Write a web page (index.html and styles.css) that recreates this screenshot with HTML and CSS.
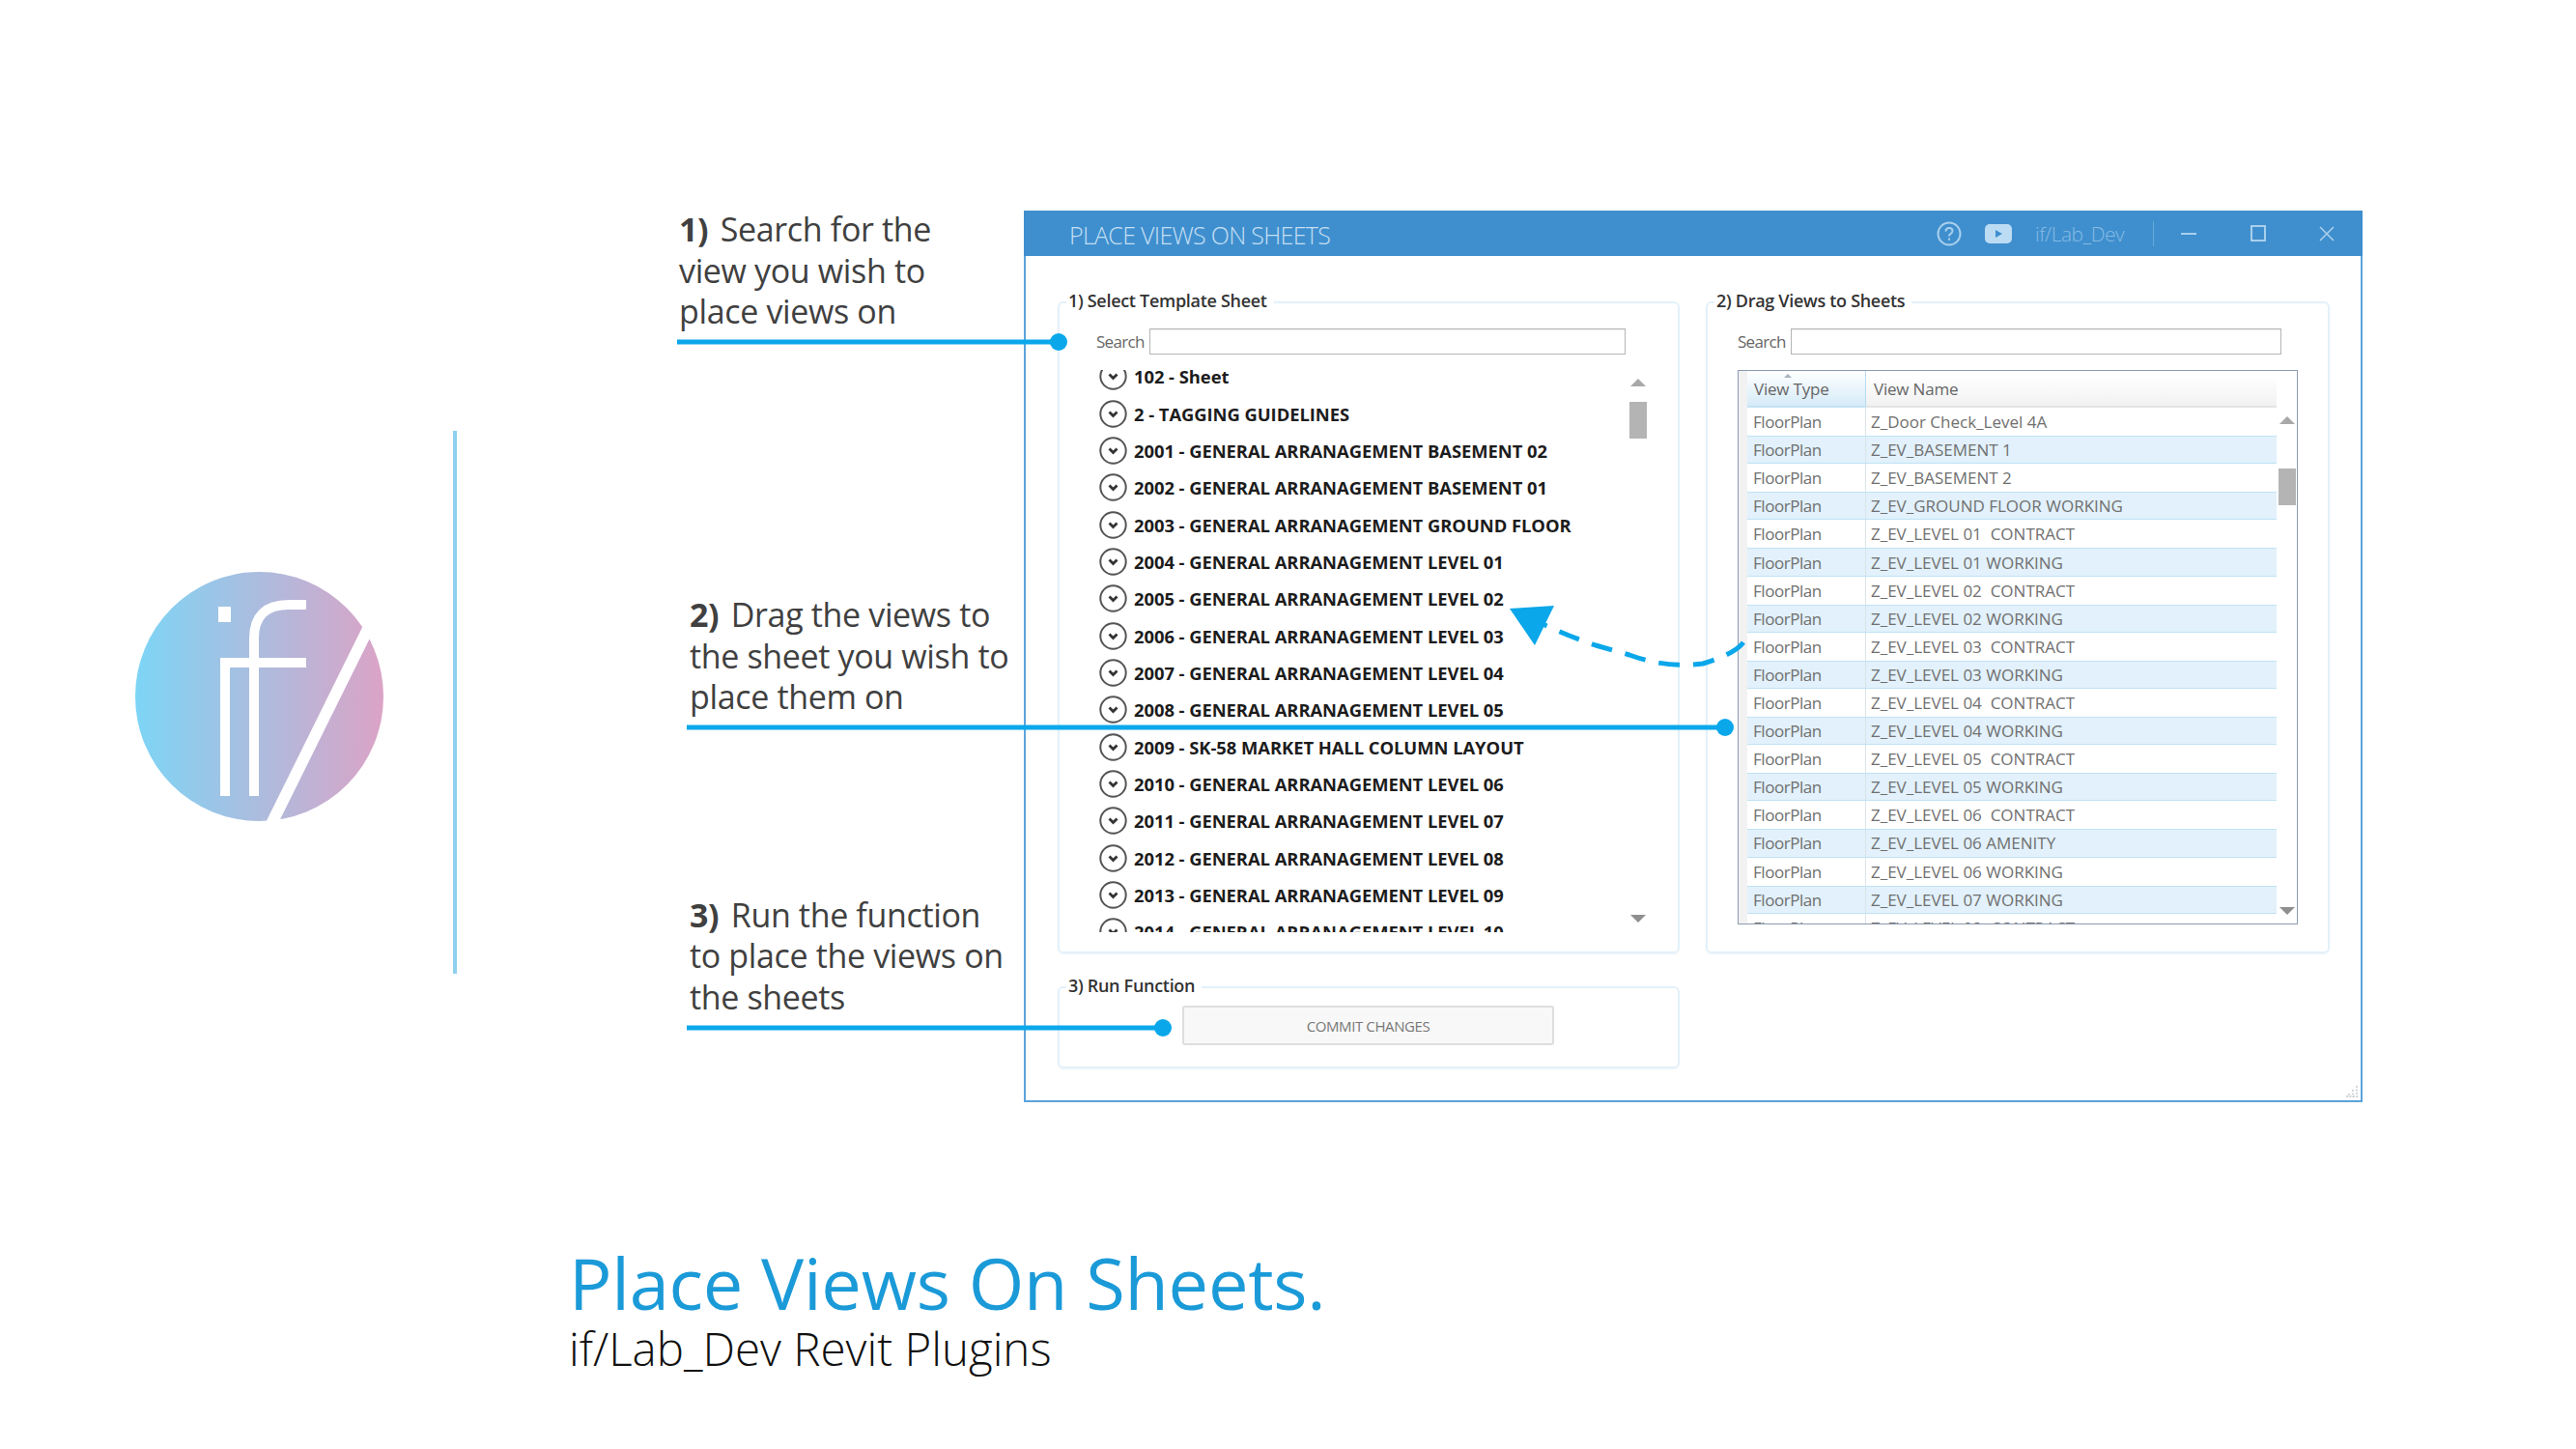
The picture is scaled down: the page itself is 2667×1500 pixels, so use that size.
FILE: index.html
```html
<!DOCTYPE html>
<html lang="en">
<head>
    <meta charset="UTF-8">
    <title>Place Views On Sheets</title>
    <link rel="stylesheet" href="styles.css">
</head>
<body>
<div class="slide">
    <div class="top">
        <!-- logo and divider -->
        <div class="brand">
            <svg class="logo" width="260" height="262" viewBox="0 0 260 262">
                <defs>
                    <linearGradient id="logoFill" x1="0" y1="0" x2="1" y2="0">
                        <stop offset="0" stop-color="#7dd5f6"/>
                        <stop offset="1" stop-color="#dba3c6"/>
                    </linearGradient>
                </defs>
                <ellipse cx="129.5" cy="130" rx="128.5" ry="129" fill="url(#logoFill)"/>
                <path d="M243 58 L142 262" stroke="#fff" stroke-width="12" fill="none"/>
                <rect x="87" y="37" width="13" height="16" fill="#fff"/>
                <path d="M94 95 V233 M124 233 V70 Q124 35 160 35 H178 M89 95 H178" stroke="#fff" stroke-width="10" fill="none"/>
            </svg>
        </div>

        <!-- step notes -->
        <div class="notes">
            <p class="note note-1"><b>1)</b> Search for the<br>view you wish to<br>place views on</p>
            <p class="note note-2"><b>2)</b> Drag the views to<br>the sheet you wish to<br>place them on</p>
            <p class="note note-3"><b>3)</b> Run the function<br>to place the views on<br>the sheets</p>
        </div>

        <!-- plugin window -->
        <div class="window">
            <div class="titlebar">
                <span class="window-title">PLACE VIEWS ON SHEETS</span>
                <svg class="help-icon" width="26" height="26" viewBox="0 0 26 26">
                    <circle cx="13" cy="13" r="11.5" fill="none" stroke="#a9cfec" stroke-width="2"/>
                    <path d="M9.5 10.5 Q9.5 7 13 7 Q16.5 7 16.5 10 Q16.5 12 14.5 13 Q13 13.8 13 15.5" fill="none" stroke="#a9cfec" stroke-width="2"/>
                    <rect x="12" y="17.5" width="2" height="2.2" fill="#a9cfec"/>
                </svg>
                <svg class="yt-icon" width="28" height="20" viewBox="0 0 28 20">
                    <rect width="28" height="20" rx="5" fill="#bcdcf3"/>
                    <path d="M11 6 L18 10 L11 14 Z" fill="#3f8fce"/>
                </svg>
                <span class="user-name">if/Lab_Dev</span>
                <span class="bar-divider"></span>
                <span class="win-min"></span>
                <span class="win-max"></span>
                <svg class="win-close" width="16" height="16" viewBox="0 0 16 16">
                    <path d="M1 1 L15 15 M15 1 L1 15" stroke="#a9cfec" stroke-width="1.6"/>
                </svg>
            </div>

            <div class="window-body">
                <div class="groups">
                    <fieldset class="group group-sheets">
                        <legend>1) Select Template Sheet</legend>
                        <div class="search-row">
                            <label>Search</label>
                            <span class="search-box"></span>
                        </div>
                        <div class="sheet-area">
                            <ul class="sheet-list">
                                <li><svg class="chev"><use href="#chevron"/></svg>102 - Sheet</li>
                                <li><svg class="chev"><use href="#chevron"/></svg>2 - TAGGING GUIDELINES</li>
                                <li><svg class="chev"><use href="#chevron"/></svg>2001 - GENERAL ARRANAGEMENT BASEMENT 02</li>
                                <li><svg class="chev"><use href="#chevron"/></svg>2002 - GENERAL ARRANAGEMENT BASEMENT 01</li>
                                <li><svg class="chev"><use href="#chevron"/></svg>2003 - GENERAL ARRANAGEMENT GROUND FLOOR</li>
                                <li><svg class="chev"><use href="#chevron"/></svg>2004 - GENERAL ARRANAGEMENT LEVEL 01</li>
                                <li><svg class="chev"><use href="#chevron"/></svg>2005 - GENERAL ARRANAGEMENT LEVEL 02</li>
                                <li><svg class="chev"><use href="#chevron"/></svg>2006 - GENERAL ARRANAGEMENT LEVEL 03</li>
                                <li><svg class="chev"><use href="#chevron"/></svg>2007 - GENERAL ARRANAGEMENT LEVEL 04</li>
                                <li><svg class="chev"><use href="#chevron"/></svg>2008 - GENERAL ARRANAGEMENT LEVEL 05</li>
                                <li><svg class="chev"><use href="#chevron"/></svg>2009 - SK-58 MARKET HALL COLUMN LAYOUT</li>
                                <li><svg class="chev"><use href="#chevron"/></svg>2010 - GENERAL ARRANAGEMENT LEVEL 06</li>
                                <li><svg class="chev"><use href="#chevron"/></svg>2011 - GENERAL ARRANAGEMENT LEVEL 07</li>
                                <li><svg class="chev"><use href="#chevron"/></svg>2012 - GENERAL ARRANAGEMENT LEVEL 08</li>
                                <li><svg class="chev"><use href="#chevron"/></svg>2013 - GENERAL ARRANAGEMENT LEVEL 09</li>
                                <li><svg class="chev"><use href="#chevron"/></svg>2014 - GENERAL ARRANAGEMENT LEVEL 10</li>
                            </ul>
                            <div class="scroll scroll-sheets">
                                <span class="arrow-up"></span>
                                <span class="thumb"></span>
                                <span class="arrow-down"></span>
                            </div>
                        </div>
                    </fieldset>

                    <fieldset class="group group-views">
                        <legend>2) Drag Views to Sheets</legend>
                        <div class="search-row">
                            <label>Search</label>
                            <span class="search-box"></span>
                        </div>
                        <div class="grid-box">
                            <div class="grid-main">
                                <div class="grid-head">
                                    <span class="head-type">View Type</span>
                                    <span class="head-name">View Name</span>
                                </div>
                                <div class="grid-row"><span>FloorPlan</span><span>Z_Door Check_Level 4A</span></div>
                                <div class="grid-row"><span>FloorPlan</span><span>Z_EV_BASEMENT 1</span></div>
                                <div class="grid-row"><span>FloorPlan</span><span>Z_EV_BASEMENT 2</span></div>
                                <div class="grid-row"><span>FloorPlan</span><span>Z_EV_GROUND FLOOR WORKING</span></div>
                                <div class="grid-row"><span>FloorPlan</span><span>Z_EV_LEVEL 01&nbsp; CONTRACT</span></div>
                                <div class="grid-row"><span>FloorPlan</span><span>Z_EV_LEVEL 01 WORKING</span></div>
                                <div class="grid-row"><span>FloorPlan</span><span>Z_EV_LEVEL 02&nbsp; CONTRACT</span></div>
                                <div class="grid-row"><span>FloorPlan</span><span>Z_EV_LEVEL 02 WORKING</span></div>
                                <div class="grid-row"><span>FloorPlan</span><span>Z_EV_LEVEL 03&nbsp; CONTRACT</span></div>
                                <div class="grid-row"><span>FloorPlan</span><span>Z_EV_LEVEL 03 WORKING</span></div>
                                <div class="grid-row"><span>FloorPlan</span><span>Z_EV_LEVEL 04&nbsp; CONTRACT</span></div>
                                <div class="grid-row"><span>FloorPlan</span><span>Z_EV_LEVEL 04 WORKING</span></div>
                                <div class="grid-row"><span>FloorPlan</span><span>Z_EV_LEVEL 05&nbsp; CONTRACT</span></div>
                                <div class="grid-row"><span>FloorPlan</span><span>Z_EV_LEVEL 05 WORKING</span></div>
                                <div class="grid-row"><span>FloorPlan</span><span>Z_EV_LEVEL 06&nbsp; CONTRACT</span></div>
                                <div class="grid-row"><span>FloorPlan</span><span>Z_EV_LEVEL 06 AMENITY</span></div>
                                <div class="grid-row"><span>FloorPlan</span><span>Z_EV_LEVEL 06 WORKING</span></div>
                                <div class="grid-row"><span>FloorPlan</span><span>Z_EV_LEVEL 07 WORKING</span></div>
                                <div class="grid-row"><span>FloorPlan</span><span>Z_EV_LEVEL 08&nbsp; CONTRACT</span></div>
                            </div>
                            <div class="scroll scroll-views">
                                <span class="arrow-up"></span>
                                <span class="thumb"></span>
                                <span class="arrow-down"></span>
                            </div>
                        </div>
                    </fieldset>
                </div>

                <fieldset class="group group-run">
                    <legend>3) Run Function</legend>
                    <button class="commit-btn" type="button">COMMIT CHANGES</button>
                </fieldset>
            </div>
            <svg class="grip" width="14" height="14" viewBox="0 0 14 14">
                <path d="M12 1 V13 M8 5 V13 M4 9 V13 M1 12 H13" stroke="#c5c9cd" stroke-width="1.5" stroke-dasharray="2 1.5"/>
            </svg>
        </div>
    </div>

    <div class="caption">
        <h1>Place Views On Sheets.</h1>
        <h2>if/Lab_Dev Revit Plugins</h2>
    </div>

    <!-- callout lines and drag arrow, drawn over the window -->
    <svg class="callouts" width="2667" height="1500" viewBox="0 0 2667 1500">
        <g stroke="#0aa7ea" stroke-width="5" fill="none">
            <path d="M701 354 H1096"/>
            <path d="M711 753 H1786"/>
            <path d="M711 1064 H1204"/>
            <path d="M1805 665 Q1796 677 1763 687 Q1725 692 1687 678 L1652 668 Q1625 659 1597 646" stroke-dasharray="22 14"/>
        </g>
        <g fill="#0aa7ea">
            <circle cx="1096" cy="354" r="9"/>
            <circle cx="1786" cy="753" r="9"/>
            <circle cx="1204" cy="1064" r="9"/>
            <path d="M1563 630 L1609 627 L1589 668 Z"/>
        </g>
    </svg>

    <svg class="icon-defs" width="0" height="0">
        <symbol id="chevron" viewBox="0 0 29 29">
            <circle cx="14.5" cy="14.5" r="13.2" fill="none" stroke="#555" stroke-width="2"/>
            <path d="M10.5 12.5 L14.5 16.5 L18.5 12.5" fill="none" stroke="#333" stroke-width="2.8"/>
        </symbol>
    </svg>
</div>
</body>
</html>
```

FILE: styles.css
```css
* {
    box-sizing: border-box;
}
body {
    margin: 0;
    background-color: #fff;
    font-family: "Open Sans", "Liberation Sans", sans-serif;
}
.slide {
    position: relative;
    width: 2667px;
    height: 1500px;
    overflow: hidden;
}
.top {
    display: flex;
    align-items: flex-start;
    padding-top: 218px;
    height: 1141px;
}

/* logo */
.brand {
    width: 473px;
    height: 562px;
    margin-top: 228px;
    border-right: 4px solid #8fd0f0;
    padding-left: 139px;
    padding-top: 145px;
}
.logo {
    display: block;
}

/* notes */
.notes {
    width: 587px;
    margin-top: -2px;
    color: #404040;
    font-size: 34px;
    line-height: 42.5px;
}
.note {
    margin: 0;
    letter-spacing: -0.35px;
}
.note b {
    margin-right: 4px;
    font-weight: 700;
}
.note-1 {
    padding-left: 230px;
}
.note-2 {
    margin-top: 271.5px;
    padding-left: 241px;
}
.note-3 {
    margin-top: 183px;
    padding-left: 241px;
}

/* window */
.window {
    position: relative;
    width: 1386px;
    height: 923px;
    border: 2px solid #5ba3dc;
    border-top: none;
    background-color: #fff;
}
.titlebar {
    display: flex;
    align-items: center;
    height: 47px;
    margin: 0 -2px;
    background-color: #3f8fce;
    color: #c5dff3;
}
.window-title {
    margin-left: 47px;
    margin-top: 2px;
    font-size: 25px;
    font-weight: 300;
    letter-spacing: -0.7px;
    width: 898px;
}
.help-icon {
    margin-left: 0;
}
.yt-icon {
    margin-left: 24px;
}
.user-name {
    margin-left: 24px;
    width: 122px;
    font-size: 21px;
    font-weight: 300;
    letter-spacing: -0.5px;
    color: #86bbe4;
}
.bar-divider {
    width: 1px;
    height: 26px;
    background-color: #6aa8da;
}
.win-min {
    width: 16px;
    height: 2px;
    margin-left: 28px;
    background-color: #a9cfec;
}
.win-max {
    width: 16px;
    height: 17px;
    margin-left: 56px;
    border: 2px solid #a9cfec;
}
.win-close {
    margin-left: 55px;
}

.window-body {
    padding: 37px 0 0 33px;
}
.groups {
    display: flex;
    gap: 27px;
}
.group {
    margin: 0;
    padding: 0;
    min-width: 0;
    border: 2px solid #e3f1fa;
    border-radius: 6px;
    box-shadow: 0 1px 2px #eef3f6;
}
.group legend {
    margin-left: 7px;
    padding: 0 7px 0 2px;
    height: 22px;
    line-height: 19px;
    font-size: 18px;
    font-weight: 600;
    letter-spacing: -0.3px;
    color: #333;
}
.group-sheets {
    width: 644px;
    height: 685px;
}
.group-views {
    width: 646px;
    height: 685px;
}

.search-row {
    display: flex;
    align-items: center;
    height: 27px;
    margin-top: 16px;
}
.search-row label {
    color: #666;
    font-size: 17px;
    letter-spacing: -0.7px;
}
.search-box {
    height: 27px;
    margin-left: 5.5px;
    border: 1px solid #b5b5b5;
    box-shadow: inset 0 1px 1px #eee;
}
.group-sheets .search-row {
    padding-left: 38px;
}
.group-sheets .search-box {
    width: 493px;
}
.group-views .search-row {
    padding-left: 31px;
}
.group-views .search-box {
    width: 508px;
}

/* sheet list */
.sheet-area {
    display: flex;
    height: 582px;
    margin-top: 16px;
    overflow: hidden;
}
.sheet-list {
    width: 590px;
    margin: -12.5px 0 0;
    padding: 0 0 0 41px;
    list-style: none;
}
.sheet-list li {
    display: flex;
    align-items: center;
    gap: 7px;
    height: 38.35px;
    font-size: 18.4px;
    font-weight: 700;
    letter-spacing: -0.05px;
    color: #1c1c1c;
    white-space: nowrap;
}
.chev {
    width: 29px;
    height: 29px;
    flex: none;
}

/* scrollbars */
.scroll {
    display: flex;
    flex-direction: column;
    align-items: center;
    width: 18px;
    flex: none;
}
.arrow-up,
.arrow-down {
    width: 0;
    height: 0;
    border-left: 8px solid transparent;
    border-right: 8px solid transparent;
}
.arrow-up {
    border-bottom: 8px solid #a8a8a8;
}
.arrow-down {
    border-top: 8px solid #8f8f8f;
}
.thumb {
    width: 18px;
    height: 38px;
    background-color: #b4b4b4;
}
.scroll-sheets {
    padding-top: 9px;
}
.scroll-sheets .thumb {
    margin-top: 16px;
}
.scroll-sheets .arrow-down {
    margin-top: 493px;
}

/* views table */
.grid-box {
    display: flex;
    width: 580px;
    height: 574px;
    margin: 16px 0 0 31px;
    border: 1.5px solid #8c9bb0;
    overflow: hidden;
}
.grid-main {
    width: 557px;
    flex: none;
    padding-left: 9px;
    background-color: #fff;
    background-image: linear-gradient(#f2f2f2, #f2f2f2);
    background-size: 9px 100%;
    background-repeat: no-repeat;
}
.grid-head {
    display: flex;
    height: 38px;
    font-size: 17px;
    letter-spacing: -0.2px;
    color: #666;
}
.grid-head span {
    display: flex;
    align-items: center;
}
.head-type {
    position: relative;
    width: 123px;
    padding-left: 7px;
    background: linear-gradient(#fff, #d6ebf8);
    border-right: 1px solid #b5dcf3;
    border-bottom: 2px solid #c4e2f4;
}
.head-type::before {
    content: "";
    position: absolute;
    left: 38px;
    top: 3px;
    border-left: 4px solid transparent;
    border-right: 4px solid transparent;
    border-bottom: 4px solid #a8b4be;
}
.head-name {
    flex: 1;
    padding-left: 8px;
    background: linear-gradient(#fff 15%, #f1f1f1);
    border-bottom: 2px solid #e4e4e4;
}
.grid-row {
    display: flex;
    align-items: center;
    height: 29.1px;
    font-size: 17px;
    color: #707070;
    white-space: pre;
}
.grid-row:nth-child(odd) {
    background-color: #e2f1fb;
    border-top: 1px solid #bfe3f5;
    border-bottom: 1px solid #bfe3f5;
}
.grid-row span:first-child {
    width: 123px;
    padding-left: 6px;
    letter-spacing: -0.45px;
    border-right: 1px solid #dbe4ea;
    align-self: stretch;
    display: flex;
    align-items: center;
}
.grid-row span:last-child {
    padding-left: 5px;
}
.scroll-views {
    margin-left: 2px;
    padding-top: 47px;
}
.scroll-views .thumb {
    margin-top: 46px;
}
.scroll-views .arrow-down {
    margin-top: 416px;
}

/* run group */
.group-run {
    width: 644px;
    height: 95px;
    margin-top: 24px;
}
.commit-btn {
    display: block;
    width: 385px;
    height: 41px;
    margin: 8px 0 0 127px;
    border: 2px solid #dedede;
    border-radius: 3px;
    background-color: #f8f8f8;
    color: #777;
    font-family: inherit;
    font-size: 15px;
    font-weight: 400;
    letter-spacing: -0.4px;
}
.grip {
    position: absolute;
    right: 2px;
    bottom: 2px;
}

/* caption */
.caption {
    margin: 146px 0 0 589px;
}
.caption h1 {
    margin: 0;
    height: 79px;
    font-size: 74px;
    line-height: 82px;
    font-weight: 400;
    letter-spacing: -0.25px;
    color: #1b9ad8;
}
.caption h2 {
    margin: 0;
    font-size: 47.5px;
    line-height: 60px;
    font-weight: 300;
    color: #111;
}

/* overlay */
.callouts {
    position: absolute;
    left: 0;
    top: 0;
    pointer-events: none;
}
.icon-defs {
    position: absolute;
}
```
